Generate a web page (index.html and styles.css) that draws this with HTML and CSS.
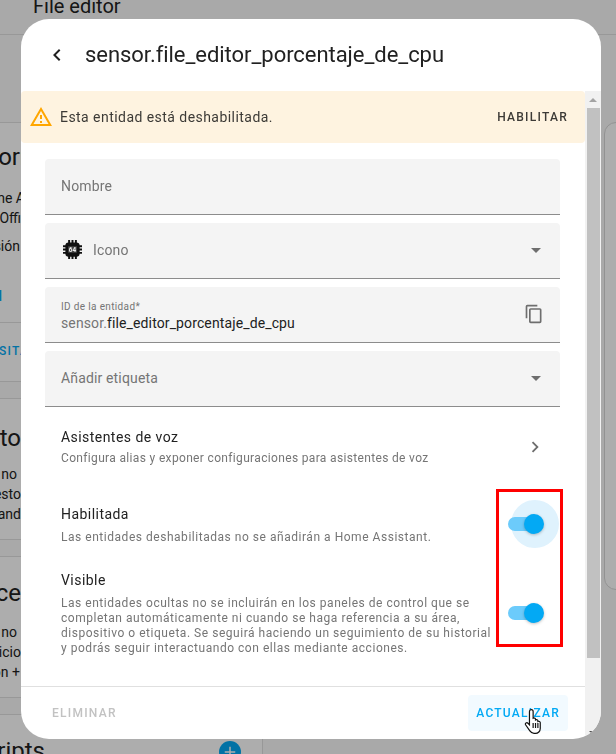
FILE: index.html
```html
<!DOCTYPE html>
<html lang="es">
<head>
    <meta charset="UTF-8">
    <title>sensor.file_editor_porcentaje_de_cpu</title>
    <link rel="stylesheet" href="styles.css">
</head>
<body>
    <!-- page behind the dialog -->
    <div class="page">
        <div class="page-header">File editor</div>
        <div class="columns">
            <div class="col-left">
                <section class="card card-info">
                    <h2 class="card-title"><span>Inform</span></h2>
                    <p class="line w-25"><span>Home A</span></p>
                    <p class="line"><span>Offi</span></p>
                    <p class="line line-gap w-20"><span>Versión</span></p>
                    <p class="line line-link w-2"><span>l</span></p>
                    <div class="card-actions"><span>VISITAR</span></div>
                </section>
                <section class="card card-budget">
                    <h2 class="card-title"><span>Presupuesto</span></h2>
                    <p class="line w-17"><span>no</span></p>
                    <p class="line"><span>resto</span></p>
                    <p class="line"><span>mand</span></p>
                </section>
                <section class="card card-access">
                    <h2 class="card-title"><span>Acce</span></h2>
                    <p class="line w-17"><span>no</span></p>
                    <p class="line"><span>Inicio</span></p>
                    <p class="line w-20"><span>con +</span></p>
                </section>
                <section class="card card-last">
                    <h2 class="card-title"><span>Scripts</span></h2>
                    <span class="add-btn">
                        <svg viewBox="0 0 24 24"><path d="M19,13H13V19H11V13H5V11H11V5H13V11H19V13Z"/></svg>
                    </span>
                </section>
            </div>
            <div class="col-right">
                <div class="side-card"></div>
            </div>
        </div>
    </div>
    <div class="scrim"></div>

    <div class="dialog">
        <header class="dialog-header">
            <svg class="back-icon" viewBox="0 0 24 24"><path d="M15.41,16.58L10.83,12L15.41,7.41L14,6L8,12L14,18L15.41,16.58Z"/></svg>
            <h1>sensor.file_editor_porcentaje_de_cpu</h1>
        </header>
        <div class="dialog-body">
            <div class="dialog-main">
                <div class="content">
                    <div class="alert">
                        <svg class="alert-icon" viewBox="0 0 24 24"><path d="M12,2L1,21H23M12,6L19.53,19H4.47M11,10V14H13V10M11,16V18H13V16"/></svg>
                        <span class="alert-text">Esta entidad está deshabilitada.</span>
                        <span class="alert-action">HABILITAR</span>
                    </div>

                    <div class="fields">
                        <div class="field"><span class="placeholder">Nombre</span></div>
                        <div class="field">
                            <svg class="chip-icon" viewBox="0 0 24 24">
                                <path d="M6.500 0h2.500v4H6.500zM10.750 0h2.500v4h-2.500zM15 0h2.500v4H15zM6.500 20h2.500v4H6.500zM10.750 20h2.500v4h-2.500zM15 20h2.500v4H15zM0 6.500h4V9H0zM0 10.750h4v2.500H0zM0 15h4v2.500H0zM20 6.500h4V9h-4zM20 10.750h4v2.500h-4zM20 15h4v2.500h-4z"/>
                                <rect x="3" y="3" width="18" height="18" rx="4"/>
                                <rect x="6.500" y="8" width="11" height="8" fill="#4a4a4a"/>
                                <text x="12" y="15" text-anchor="middle" class="chip-text">64</text>
                            </svg>
                            <span class="placeholder">Icono</span>
                            <svg class="arrow-icon" viewBox="0 0 24 24"><path d="M7,10L12,15L17,10H7Z"/></svg>
                        </div>
                        <div class="field field-id">
                            <div class="id-text">
                                <div class="id-label">ID de la entidad*</div>
                                <div class="id-value"><span class="id-prefix">sensor.</span>file_editor_porcentaje_de_cpu</div>
                            </div>
                            <svg class="copy-icon" viewBox="0 0 24 24"><path d="M19,21H8V7H19M19,5H8A2,2 0 0,0 6,7V21A2,2 0 0,0 8,23H19A2,2 0 0,0 21,21V7A2,2 0 0,0 19,5M16,1H4A2,2 0 0,0 2,3V17H4V3H16V1Z"/></svg>
                        </div>
                        <div class="field">
                            <span class="placeholder">Añadir etiqueta</span>
                            <svg class="arrow-icon" viewBox="0 0 24 24"><path d="M7,10L12,15L17,10H7Z"/></svg>
                        </div>
                    </div>

                    <div class="row row-voice">
                        <div class="row-text">
                            <div class="row-title">Asistentes de voz</div>
                            <div class="row-desc">Configura alias y exponer configuraciones para asistentes de voz</div>
                        </div>
                        <svg class="chevron-icon" viewBox="0 0 24 24"><path d="M8.59,16.58L13.17,12L8.59,7.41L10,6L16,12L10,18L8.59,16.58Z"/></svg>
                    </div>

                    <div class="row row-enabled">
                        <div class="row-text">
                            <div class="row-title">Habilitada</div>
                            <div class="row-desc">Las entidades deshabilitadas no se añadirán a Home Assistant.</div>
                        </div>
                        <span class="switch switch-focus"><span class="switch-thumb"></span></span>
                    </div>

                    <div class="row row-visible">
                        <div class="row-text">
                            <div class="row-title">Visible</div>
                            <div class="row-desc">Las entidades ocultas no se incluirán en los paneles de control que se completan automáticamente ni cuando se haga referencia a su área, dispositivo o etiqueta. Se seguirá haciendo un seguimiento de su historial y podrás seguir interactuando con ellas mediante acciones.</div>
                        </div>
                        <span class="switch"><span class="switch-thumb"></span></span>
                    </div>
                </div>
                <footer class="dialog-footer">
                    <span class="btn-delete">ELIMINAR</span>
                    <span class="btn-update">ACTUALIZAR</span>
                </footer>
            </div>
            <div class="scrollbar">
                <span class="scroll-up"></span>
                <div class="scroll-thumb"></div>
                <span class="scroll-down"></span>
            </div>
        </div>
    </div>

    <div class="highlight-box"></div>
    <svg class="hand-cursor" viewBox="0 0 18 25">
        <path d="M6.5 1.5c1 0 1.7.8 1.7 1.8V9.5c1-.6 2.2 0 2.2 1v.5c1-.6 2.2 0 2.2 1v.5c1-.5 2.2 0 2.2 1V19c0 2.5-2 4.5-4.5 4.5H9c-1.8 0-3-1-4-2.500L1.200 15.500c-.7-1.200 1-2.600 2.200-1.400L4.800 15.500V3.300c0-1 .7-1.800 1.700-1.800Z"/>
        <path d="M8.200 14v4.500M10.400 14v4.500M12.600 14v4.500"/>
    </svg>
</body>
</html>
```
FILE: styles.css
```css
* {
    box-sizing: border-box;
}

html, body {
    height: 100%;
}

body {
    margin: 0;
    overflow: hidden;
    font-family: 'Roboto', 'Liberation Sans', sans-serif;
    color: #212121;
    background-color: #fafafa;
}

/* page behind the dialog */
.page {
    height: 754px;
    overflow: hidden;
}

.page-header {
    height: 35px;
    padding-left: 33px;
    font-size: 20px;
    line-height: 12px;
    border-bottom: 1px solid #e0e0e0;
}

.columns {
    display: flex;
    justify-content: space-between;
    padding-top: 87px;
}

.col-left {
    width: 263px;
    border-right: 1px solid #e0e0e0;
}

.col-right {
    width: 12px;
}

.side-card {
    width: 40px;
    height: 468px;
    border: 1px solid #d8d8d8;
    border-radius: 12px;
    background: #fff;
}

.card {
    position: relative;
    margin-bottom: 16px;
    background: #fff;
    border-top: 1px solid #e0e0e0;
    border-bottom: 1px solid #e0e0e0;
}

.card-info {
    height: 260px;
}

.card-budget,
.card-access {
    height: 142px;
}

.card-last {
    height: 60px;
    margin-bottom: 0;
}

/* only the end of each text sticks out left of the dialog */
.card-title,
.line {
    display: flex;
    justify-content: flex-end;
    width: 21px;
    margin: 0;
    white-space: nowrap;
}

.card-title {
    height: 32px;
    margin-top: 18px;
    margin-bottom: 15px;
    font-size: 24px;
    font-weight: 400;
    line-height: 32px;
}

.card-info .card-title {
    width: 41px;
}

.card-budget .card-title {
    margin-top: 23px;
    margin-bottom: 10px;
}

.card-access .card-title {
    margin-top: 20px;
    margin-bottom: 13px;
}

.card-last .card-title {
    width: 45px;
    margin-top: 20px;
}

.line {
    height: 20px;
    font-size: 14px;
    line-height: 20px;
}

.w-2 {
    width: 2px;
}

.w-17 {
    width: 17px;
}

.w-20 {
    width: 20px;
}

.w-25 {
    width: 25px;
}

.line-gap {
    margin-top: 8px;
}

.line-link {
    margin-top: 30px;
    color: #03a9f4;
    font-weight: 500;
}

.card-actions {
    display: flex;
    justify-content: flex-end;
    width: 38px;
    margin-top: 16px;
    padding-top: 21px;
    border-top: 1px solid #e0e0e0;
    font-size: 12px;
    line-height: 15px;
    font-weight: 500;
    letter-spacing: 1.250px;
    color: #03a9f4;
    white-space: nowrap;
}

.add-btn {
    position: absolute;
    left: 219px;
    top: 26px;
    display: flex;
    align-items: center;
    justify-content: center;
    width: 22px;
    height: 22px;
    border-radius: 50%;
    background: #03a9f4;
}

.add-btn svg {
    width: 18px;
    height: 18px;
    fill: #fff;
}

.scrim {
    position: fixed;
    inset: 0;
    background: rgba(0, 0, 0, 0.32);
}

/* dialog */
.dialog {
    position: fixed;
    left: 21px;
    top: 19px;
    display: flex;
    flex-direction: column;
    width: 580px;
    height: 720px;
    overflow: hidden;
    background: #fff;
    border-radius: 28px;
}

.dialog-header {
    display: flex;
    align-items: center;
    flex: none;
    height: 72px;
    padding-left: 24px;
}

.back-icon {
    width: 24px;
    height: 24px;
    fill: #212121;
}

.dialog-header h1 {
    margin: 0 0 0 16px;
    font-size: 22px;
    font-weight: 400;
    line-height: 28px;
    letter-spacing: -0.05px;
}

.dialog-body {
    display: flex;
    flex: 1;
    min-height: 0;
}

.dialog-main {
    display: flex;
    flex-direction: column;
    flex: 1;
    min-width: 0;
}

.content {
    flex: 1;
    min-height: 0;
    overflow: hidden;
}

.alert {
    display: flex;
    align-items: center;
    height: 52px;
    padding: 0 17px 0 8px;
    background: #fef3e0;
    border-radius: 4px;
}

.alert-icon {
    width: 24px;
    height: 24px;
    fill: #ffa600;
}

.alert-text {
    flex: 1;
    margin-left: 7px;
    font-size: 14px;
    letter-spacing: 0.45px;
    color: #3c3a36;
}

.alert-action {
    font-size: 12px;
    font-weight: 500;
    letter-spacing: 1.250px;
    color: #3c3a36;
}

.fields {
    display: flex;
    flex-direction: column;
    gap: 8px;
    margin: 16px 25px 0 24px;
}

.field {
    display: flex;
    align-items: center;
    height: 56px;
    padding: 0 16px 2px;
    background: #f4f4f4;
    border-bottom: 1px solid #8c8c8c;
    border-radius: 4px 4px 0 0;
}

.placeholder {
    flex: 1;
    font-size: 14px;
    letter-spacing: 0.15px;
    color: #757575;
}

.chip-icon {
    width: 19px;
    height: 19px;
    margin: 0 11px 0 2px;
    fill: #111;
}

.chip-text {
    font-family: 'Roboto', sans-serif;
    font-size: 8px;
    font-weight: 700;
    fill: #ececec;
}

.arrow-icon {
    width: 24px;
    height: 24px;
    margin-right: -4px;
    fill: #6e6e6e;
}

.id-text {
    flex: 1;
    padding-top: 4px;
}

.id-label {
    font-size: 10px;
    line-height: 14px;
    letter-spacing: 0.35px;
    color: #757575;
}

.id-value {
    font-size: 14px;
    line-height: 18px;
    letter-spacing: 0.12px;
    color: #212121;
}

.id-prefix {
    color: #757575;
}

.copy-icon {
    width: 20px;
    height: 20px;
    fill: #6e6e6e;
}

.row {
    position: relative;
    display: flex;
    margin: 0 25px 0 24px;
    padding: 0 16px;
}

.row-voice {
    align-items: center;
    padding-top: 20px;
}

.row-enabled {
    margin-top: 38px;
}

.row-visible {
    margin-top: 25px;
}

.row-text {
    width: 434px;
}

.row-title {
    font-size: 14px;
    line-height: 20px;
    letter-spacing: 0.45px;
    color: #212121;
}

.row-desc {
    margin-top: 6px;
    font-size: 12px;
    line-height: 15px;
    letter-spacing: 0.53px;
    color: #757575;
}

.row-voice .row-desc {
    margin-top: 4px;
    letter-spacing: 0.34px;
}

.chevron-icon {
    width: 22px;
    height: 22px;
    margin-left: auto;
    margin-right: -2px;
    fill: #6e6e6e;
}

.switch {
    position: absolute;
    left: 463px;
    width: 27px;
    height: 14px;
    background: #6ccbfb;
    border-radius: 7px;
}

.row-enabled .switch {
    top: 13px;
}

.row-visible .switch {
    top: 36px;
}

.switch-thumb {
    position: absolute;
    left: 16px;
    top: -3px;
    width: 20px;
    height: 20px;
    background: #03a9f4;
    border-radius: 50%;
    box-shadow: 0 1px 3px rgba(0, 0, 0, 0.25);
}

.switch-focus {
    background: transparent;
}

.switch-focus::before {
    content: "";
    position: absolute;
    left: 3px;
    top: -17px;
    width: 48px;
    height: 48px;
    background: #dff2fd;
    border-radius: 50%;
}

.switch-focus::after {
    content: "";
    position: absolute;
    inset: 0;
    background: #6ccbfb;
    border-radius: 7px;
}

.switch-focus .switch-thumb {
    z-index: 1;
}

.dialog-footer {
    display: flex;
    align-items: center;
    justify-content: space-between;
    flex: none;
    height: 53px;
    padding: 0 17px 0 31px;
    border-top: 1px solid #e0e0e0;
}

.btn-delete {
    font-size: 12px;
    font-weight: 500;
    letter-spacing: 1.250px;
    color: #c2c2c2;
}

.btn-update {
    display: flex;
    align-items: center;
    height: 36px;
    padding: 0 8px;
    font-size: 12px;
    font-weight: 500;
    letter-spacing: 1.250px;
    color: #03a9f4;
    background: #f2faff;
    border-radius: 4px;
}

.scrollbar {
    display: flex;
    flex-direction: column;
    align-items: center;
    flex: none;
    width: 16px;
    padding-bottom: 4px;
    background: #f1f1f1;
}

.scroll-up,
.scroll-down {
    width: 0;
    height: 0;
    border-left: 4px solid transparent;
    border-right: 4px solid transparent;
}

.scroll-up {
    margin-top: 7px;
    border-bottom: 4px solid #a3a3a3;
}

.scroll-thumb {
    flex: none;
    width: 13px;
    height: 550px;
    margin-top: 6px;
    background: #c1c1c1;
}

.scroll-down {
    margin-top: auto;
    border-top: 4px solid #505050;
}

/* things drawn on top of the screenshot */
.highlight-box {
    position: fixed;
    left: 496px;
    top: 489px;
    width: 67px;
    height: 158px;
    border: 3px solid #ff0000;
}

.hand-cursor {
    position: fixed;
    left: 524px;
    top: 708px;
    width: 20px;
    height: 27px;
    fill: #fff;
    stroke: #111;
    stroke-width: 1.100;
}
```
